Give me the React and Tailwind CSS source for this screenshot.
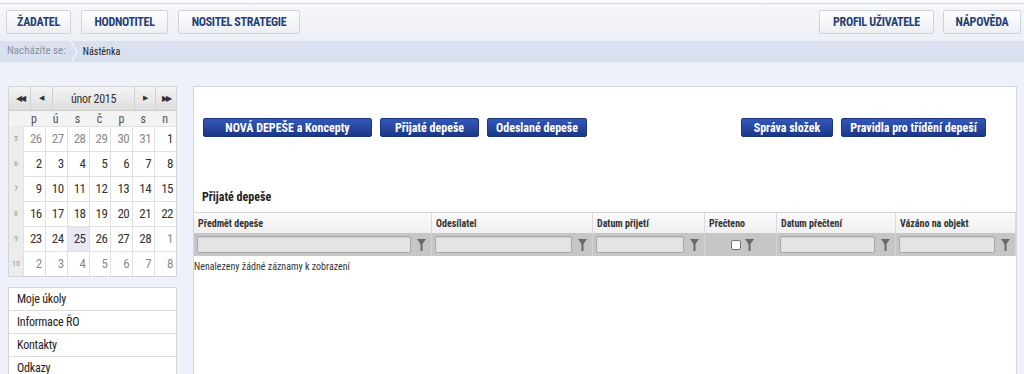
import React from "react";

const font = "font-['Roboto_Condensed','Roboto',sans-serif] [font-stretch:75%]";

function Funnel({ className = "" }) {
  return (
    <svg width="9" height="12" viewBox="0 0 9 12" className={className}>
      <polygon points="0,0 9,0 5.5,5 5.5,12 3.5,12 3.5,5" fill="#6a6a6a" />
    </svg>
  );
}

function TopButton({ children, w }) {
  return (
    <div
      className={`${w} h-[24px] flex items-center justify-center rounded-[2px] border border-[#cfd3db] bg-gradient-to-b from-[#ffffff] to-[#eceef2] text-[12px] tracking-[-0.3px] font-bold text-[#253f78]`}
    >
      {children}
    </div>
  );
}

function BlueButton({ children, w }) {
  return (
    <div
      className={`${w} h-[19px] flex items-center justify-center rounded-[2px] border border-[#1a3580] bg-gradient-to-b from-[#3358bb] to-[#1c3787] text-[12px] font-bold text-white`}
    >
      {children}
    </div>
  );
}

const weeks = [
  { n: 5, d: [26, 27, 28, 29, 30, 31, 1], g: [1, 1, 1, 1, 1, 1, 0] },
  { n: 6, d: [2, 3, 4, 5, 6, 7, 8], g: [0, 0, 0, 0, 0, 0, 0] },
  { n: 7, d: [9, 10, 11, 12, 13, 14, 15], g: [0, 0, 0, 0, 0, 0, 0] },
  { n: 8, d: [16, 17, 18, 19, 20, 21, 22], g: [0, 0, 0, 0, 0, 0, 0] },
  { n: 9, d: [23, 24, 25, 26, 27, 28, 1], g: [0, 0, 0, 0, 0, 0, 1] },
  { n: 10, d: [2, 3, 4, 5, 6, 7, 8], g: [1, 1, 1, 1, 1, 1, 1] },
];

function Calendar() {
  return (
    <div className="w-[169px] border border-[#d2d4d8] bg-white">
      {/* header */}
      <div className="h-[24px] flex bg-gradient-to-b from-[#f4f4f4] to-[#dedede] border-b border-[#d0d0d0] text-[#333]">
        <div className="w-[22px] flex items-center justify-center border-r border-[#d0d0d0] text-[8px] tracking-[-2px]">◀◀</div>
        <div className="w-[22px] flex items-center justify-center border-r border-[#d0d0d0] text-[7px]">◀</div>
        <div className="flex-1 flex items-center justify-center text-[12px] tracking-[-0.3px]">únor 2015</div>
        <div className="w-[21px] flex items-center justify-center border-l border-[#d0d0d0] text-[7px]">▶</div>
        <div className="w-[21px] flex items-center justify-center border-l border-[#d0d0d0] text-[8px] tracking-[-2px]">▶▶</div>
      </div>
      {/* weekday row */}
      <div className="h-[15px] flex bg-[#f3f3f3] text-[12px] text-[#555]">
        <div className="w-[14px]" />
        {["p", "ú", "s", "č", "p", "s", "n"].map((l, i) => (
          <div key={i} className="w-[22px] flex items-center justify-center">
            {l}
          </div>
        ))}
      </div>
      {weeks.map((w) => (
        <div key={w.n} className="h-[25px] flex">
          <div className="w-[14px] flex items-center justify-center bg-[#ececec] text-[8px] text-[#999]">
            {w.n}
          </div>
          {w.d.map((d, i) => (
            <div
              key={i}
              className={`w-[22px] flex items-center justify-end pr-[3px] border-l border-t border-[#e0e0e0] text-[13px] tracking-[-0.5px] ${
                w.g[i] ? "text-[#8a8a8a]" : "text-[#333]"
              } ${w.n === 9 && i === 2 ? "bg-[#e6e9f4]" : ""}`}
            >
              {d}
            </div>
          ))}
        </div>
      ))}
    </div>
  );
}

function Menu() {
  const items = ["Moje úkoly", "Informace ŘO", "Kontakty", "Odkazy"];
  return (
    <div className="w-[169px] border border-[#d2d4d8] bg-white">
      {items.map((t) => (
        <div key={t} className="h-[23px] flex items-center px-[8px] border-b border-[#dcdcdc] text-[12px] tracking-[-0.2px] text-[#222]">
          {t}
        </div>
      ))}
    </div>
  );
}

const cols = [
  { t: "Předmět depeše", w: "w-[238px]" },
  { t: "Odesílatel", w: "w-[161px]" },
  { t: "Datum přijetí", w: "w-[112px]" },
  { t: "Přečteno", w: "w-[72px]", check: true },
  { t: "Datum přečtení", w: "w-[119px]" },
  { t: "Vázáno na objekt", w: "w-[120px]" },
];

function Table() {
  return (
    <div className="w-[822px]">
      <div className="h-[21px] flex border-t border-[#d6d6d6] bg-gradient-to-b from-[#fbfbfb] to-[#efefef]">
        {cols.map((c) => (
          <div key={c.t} className={`${c.w} flex items-center px-[4px] border-r border-[#dadada] text-[10px] font-bold text-[#333]`}>
            {c.t}
          </div>
        ))}
      </div>
      <div className="h-[23px] flex bg-[#c6c6c6]">
        {cols.map((c) => (
          <div key={c.t} className={`${c.w} flex items-center pl-[3px] pr-[5px] gap-[6px] border-r border-[#d4d4d4]`}>
            {c.check ? (
              <div className="flex-1 flex items-center justify-end gap-[4px] pr-[17px]">
                <div className="w-[10px] h-[10px] bg-white border border-[#777] rounded-[2px]" />
                <Funnel />
              </div>
            ) : (
              <>
                <div className="flex-1 h-[17px] rounded-[2px] border border-[#a8a8a8] bg-[#e4e4e4] shadow-[inset_0_1px_1px_rgba(0,0,0,0.08)]" />
                <Funnel />
              </>
            )}
          </div>
        ))}
      </div>
      <div className="pt-[3px] text-[10px] text-[#333]">Nenalezeny žádné záznamy k zobrazení</div>
    </div>
  );
}

export default function App() {
  return (
    <div className={`w-[1024px] h-[374px] overflow-hidden bg-[#eef0fa] ${font}`}>
      {/* top bar */}
      <div className="pt-[3px] bg-[#fafbfc]">
        <div className="h-[38px] border-t border-[#d5d9e1] bg-gradient-to-b from-[#f6f7fa] to-[#eceff6] flex items-start justify-between pl-[6px] pr-[3px] pt-[6px]">
          <div className="flex gap-[10px]">
            <TopButton w="w-[65px]">ŽADATEL</TopButton>
            <TopButton w="w-[87px]">HODNOTITEL</TopButton>
            <TopButton w="w-[122px]">NOSITEL STRATEGIE</TopButton>
          </div>
          <div className="flex gap-[9px]">
            <TopButton w="w-[115px]">PROFIL UŽIVATELE</TopButton>
            <TopButton w="w-[78px]">NÁPOVĚDA</TopButton>
          </div>
        </div>
      </div>
      {/* breadcrumb */}
      <div className="h-[22px] flex items-center bg-[#d9e0f0] border-b border-[#e6eaf4]">
        <div className="pl-[7px] pr-[4px] text-[11px] text-[#8a8f9a]">Nacházíte se:</div>
        <svg width="8" height="22" viewBox="0 0 8 22" className="mr-[5px]">
          <polyline points="1,0 7,11 1,22" fill="none" stroke="#f2f4fa" strokeWidth="1.2" />
        </svg>
        <div className="text-[10px] text-[#222]">Nástěnka</div>
      </div>
      {/* content */}
      <div className="flex pl-[8px] pt-[23px] gap-[16px]">
        <div className="flex flex-col gap-[10px]">
          <Calendar />
          <Menu />
        </div>
        <div className="w-[824px] h-[300px] border border-[#d3d6de] bg-white">
          <div className="flex items-center pl-[9px] pr-[30px] pt-[31px]">
            <div className="flex gap-[8px]">
              <BlueButton w="w-[169px]">NOVÁ DEPEŠE a Koncepty</BlueButton>
              <BlueButton w="w-[99px]">Přijaté depeše</BlueButton>
              <BlueButton w="w-[100px]">Odeslané depeše</BlueButton>
            </div>
            <div className="flex-1" />
            <div className="flex gap-[8px]">
              <BlueButton w="w-[92px]">Správa složek</BlueButton>
              <BlueButton w="w-[145px]">Pravidla pro třídění depeší</BlueButton>
            </div>
          </div>
          <div className="pl-[8px] pt-[51px] pb-[6px] text-[12px] font-bold text-[#222]">Přijaté depeše</div>
          <Table />
        </div>
      </div>
    </div>
  );
}
